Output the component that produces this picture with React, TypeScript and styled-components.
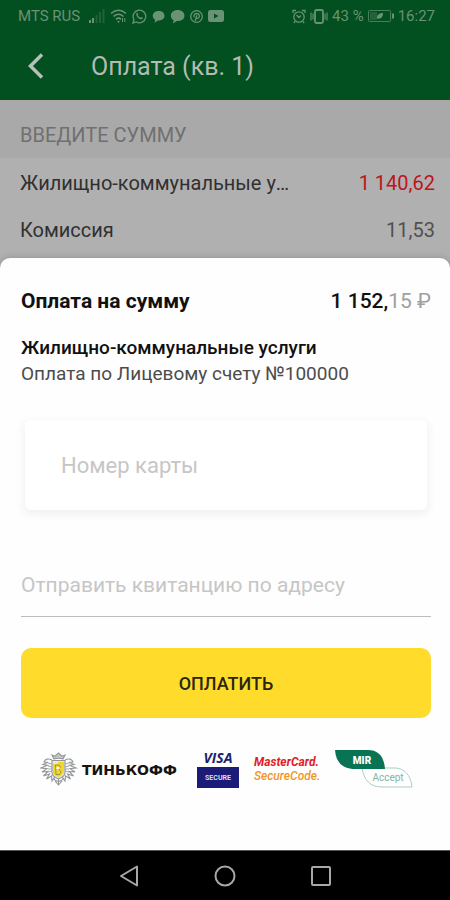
import React from "react";
import styled, { createGlobalStyle } from "styled-components";

const GlobalStyle = createGlobalStyle`
  * { box-sizing: border-box; }
  body { margin: 0; background: #b0b0b0; font-family: Roboto, "Noto Sans", sans-serif; }
  button, input { font-family: inherit; }
`;

const Screen = styled.div`
  display: flex;
  flex-direction: column;
  min-height: 100vh;
  background: #b0b0b0;
`;

const Header = styled.header`
  background: #024f20;
  color: #a9bfae;
`;

const StatusBar = styled.div`
  display: flex;
  align-items: center;
  justify-content: space-between;
  height: 32px;
  padding: 0 15px 0 18px;
  font-size: 15px;
  line-height: 20px;
  color: #6a9274;
`;

const StatusGroup = styled.div<{ $gap: number }>`
  display: flex;
  align-items: center;
  gap: ${(p) => p.$gap}px;
  white-space: nowrap;
`;

const Carrier = styled.span`
  margin-right: 4px;
`;

const Toolbar = styled.div`
  display: flex;
  align-items: center;
  height: 68px;
  padding: 0 20px;
  gap: 39px;
`;

const IconButton = styled.button`
  display: flex;
  align-items: center;
  justify-content: center;
  padding: 0;
  width: 32px;
  height: 40px;
  border: 0;
  background: none;
  color: inherit;
  cursor: pointer;
`;

const Title = styled.h1`
  margin: 0;
  padding-top: 2px;
  font-size: 25px;
  line-height: 32px;
  font-weight: 400;
  color: #b3bbb3;
`;

const SectionTitle = styled.h2`
  display: flex;
  align-items: flex-end;
  height: 58px;
  margin: 0;
  padding: 0 20px 11px;
  font-size: 20px;
  line-height: 24px;
  font-weight: 400;
  background: #a9a9a9;
  color: #707070;
`;

const Bills = styled.dl`
  margin: 0;
  padding: 1px 15px 5px 20px;
  background: #b0b0b0;
`;

const BillRow = styled.div`
  display: flex;
  justify-content: space-between;
  align-items: center;
  height: 47px;
  font-size: 20px;
  line-height: 24px;
`;

const BillName = styled.dt`
  width: 66%;
  overflow: hidden;
  text-overflow: ellipsis;
  white-space: nowrap;
  color: #303030;
`;

const BillValue = styled.dd<{ $due?: boolean }>`
  margin: 0;
  color: ${(p) => (p.$due ? "#bd1519" : "#505050")};
`;

const Sheet = styled.form`
  display: flex;
  flex-direction: column;
  flex: 1;
  padding: 29px 19px 16px 21px;
  border-radius: 10px 10px 0 0;
  background: #fefefe;
  box-shadow: 0 0 6px rgba(0, 0, 0, 0.2);
`;

const TotalRow = styled.div`
  display: flex;
  justify-content: space-between;
  align-items: center;
  font-size: 22px;
  line-height: 28px;
  color: #111;
`;

const TotalLabel = styled.h2`
  margin: 0;
  font-size: 21px;
  line-height: 28px;
  font-weight: 700;
`;

const Total = styled.span`
  font-size: 21px;
  font-weight: 500;
`;

const Minor = styled.span`
  font-weight: 400;
  color: #a0a0a0;
`;

const Details = styled.div`
  margin-top: 20px;
  line-height: 26px;
`;

const Service = styled.h3`
  margin: 0;
  font-size: 19px;
  line-height: 26px;
  font-weight: 500;
  color: #111;
`;

const Account = styled.p`
  margin: 0;
  font-size: 19px;
  line-height: 26px;
  color: #4c4c4c;
`;

const CardField = styled.label`
  display: flex;
  margin: 33px 4px 0;
  padding: 0 36px;
  height: 90px;
  border-radius: 6px;
  background: #fff;
  box-shadow: 0 3px 9px 2px rgba(0, 0, 0, 0.05);
`;

const TextInput = styled.input<{ $size: number }>`
  width: 100%;
  min-width: 0;
  padding: 0;
  border: 0;
  outline: 0;
  background: none;
  font-size: ${(p) => p.$size}px;
  color: #222;
  &::placeholder { color: #c6c6c6; opacity: 1; }
`;

const ReceiptField = styled.label`
  display: flex;
  height: 64px;
  margin-top: 43px;
  border-bottom: 1px solid #bcbcbc;
`;

const PayButton = styled.button`
  height: 70px;
  margin-top: 31px;
  padding: 2px 0 0;
  border: 0;
  border-radius: 10px;
  background: #ffdc2c;
  color: #2a250c;
  font-size: 18px;
  font-weight: 500;
  line-height: 24px;
  cursor: pointer;
`;

const Partners = styled.div`
  display: flex;
  align-items: center;
  justify-content: space-between;
  margin-top: 32px;
  padding: 0 18px 0 19px;
`;

const NavBar = styled.nav`
  display: flex;
  align-items: center;
  justify-content: center;
  gap: 64px;
  height: 50px;
  border-top: 1px solid #555;
  background: #000;
  color: #a8a8a8;
`;

function SignalIcon() {
  return (
    <svg width="16" height="14" viewBox="0 0 16 14" fill="currentColor" aria-hidden="true">
      <path d="M0 11h2v3H0zM3 9h2v5H3z" />
      <path d="M6.500 6h2v8h-2zM10 3h2v11h-2zM13.500 0h2v14h-2z" opacity=".3" />
    </svg>
  );
}

function WifiIcon() {
  return (
    <svg width="17" height="14" viewBox="0 0 17 14" fill="none" stroke="currentColor" strokeWidth="1.600" aria-hidden="true">
      <path d="M1 4.500q7.500-6.500 15 0M3.500 7.500q5-4.500 10 0M6 10.300q2.500-2.300 5 0" />
      <path d="M7 12h3l-1.500 2z" fill="currentColor" stroke="none" />
      <path d="M12.500 9v4M14.800 9v4" strokeWidth="1" />
    </svg>
  );
}

function WhatsAppIcon() {
  return (
    <svg width="15" height="15" viewBox="0 0 15 15" fill="none" stroke="currentColor" strokeWidth="1.300" aria-hidden="true">
      <path d="M1 14l.9-3.500A6.300 6.300 0 1 1 4.400 13z" />
      <path d="M4.500 4.200c.8-.9 1.300-.3 1.800 1.200l-.6.900c.7 1.200 1.500 1.900 2.700 2.500l.9-.9c1.600.6 2 1.100 1.100 1.900-2.300 2-7.200-2.500-5.900-5.600z" fill="currentColor" stroke="none" />
    </svg>
  );
}

function BubbleIcon({ size }: { size: number }) {
  return (
    <svg width={size} height={size} viewBox="0 0 14 14" fill="currentColor" aria-hidden="true">
      <path d="M7.200 1C3.500 1 .8 3.200.8 6.200c0 1.900 1 3.300 2.600 4.200L2.600 13.600 6.400 11.300C10.500 11.500 13.500 9.400 13.500 6.200 13.500 3.200 10.900 1 7.200 1z" />
    </svg>
  );
}

function PinterestIcon() {
  return (
    <svg width="13" height="13" viewBox="0 0 13 13" fill="none" stroke="currentColor" strokeWidth="1.300" aria-hidden="true">
      <circle cx="6.500" cy="6.500" r="5.800" />
      <path d="M4.300 7.300C3.200 5.300 4.600 3.500 6.700 3.500S10 5.100 9.200 7 6.800 8.800 6.100 7.600M6.800 5.300L5.200 11" />
    </svg>
  );
}

function VideoIcon() {
  return (
    <svg width="16" height="12" viewBox="0 0 16 12" fill="currentColor" aria-hidden="true">
      <path fillRule="evenodd" d="M2.500 0h11A2.500 2.500 0 0 1 16 2.500v7A2.500 2.500 0 0 1 13.500 12h-11A2.500 2.500 0 0 1 0 9.500v-7A2.500 2.500 0 0 1 2.500 0zM6 3.500v5L10.500 6z" />
    </svg>
  );
}

function AlarmIcon() {
  return (
    <svg width="14" height="15" viewBox="0 0 14 15" fill="none" stroke="currentColor" strokeWidth="1.300" aria-hidden="true">
      <circle cx="7" cy="8" r="5.200" />
      <path d="M1 4V1.500h3M10 1.500h3V4M4.500 6l2.400 2.500L9 6.500M3 12.500L1.800 14M11 12.500l1.200 1.500" />
    </svg>
  );
}

function VibrateIcon() {
  return (
    <svg width="18" height="15" viewBox="0 0 18 15" fill="none" stroke="currentColor" strokeWidth="1.800" aria-hidden="true">
      <rect x="5" y="1" width="8" height="13" rx="1.500" />
      <path d="M1 3.500v8M3 4.500v6M15 4.500v6M17 3.500v8" strokeWidth="1.100" />
    </svg>
  );
}

function BatteryIcon() {
  return (
    <svg width="26" height="12" viewBox="0 0 26 12" fill="none" stroke="currentColor" aria-hidden="true">
      <rect x=".5" y=".5" width="22" height="11" rx="1" opacity=".7" />
      <path d="M25 3.500v5" strokeWidth="2" />
      <path d="M2 2h7v8H2z" fill="currentColor" stroke="none" opacity=".3" />
      <path d="M9 8.500c-.5-3 1.500-5.500 6-5.500 0 4-2 6.500-6 5.500z" fill="currentColor" stroke="none" />
    </svg>
  );
}

function TinkoffLogo() {
  return (
    <svg width="142" height="36" viewBox="0 0 142 36" role="img" aria-label="Тинькофф">
      <g fill="none" stroke="#93979a" strokeWidth="1.100">
        <path d="M14 8l-2-4 3 1.200L18.500 2 22 5.200 25 4l-2 4c-3-1-6-1-9 0z" fill="#c4c6c8" />
        <path d="M12 9C8 7 5 8 4 11l4 .3-5 2.200 4.500.7L1 17l6 .6L2 21l6-.6L3.500 25l6-2-3 5 5-3 .5 5 3-4" />
        <path d="M25 9c4-2 7-1 8 2l-4 .3 5 2.200-4.500.7L36 17l-6 .6L35 21l-6-.6 4.500 4.600-6-2 3 5-5-3-.5 5-3-4" />
        <path d="M8 12l4 1M8 15l4 1M8 18l4 0M8 21l4-1M29 12l-4 1M29 15l-4 1M29 18h-4M29 21l-4-1" stroke="#a8aaac" />
        <path d="M13 27q5.500 7 11 0M15 30l3.500 4 3.500-4M18.500 27v7" />
        <path d="M12 9.500h13v12q0 4-6.500 6.500Q12 25.500 12 21.500z" fill="#e6e7e7" />
      </g>
      <path d="M13 13h5v-2h6v10q-1 3-5.500 5-4.500-1.500-5.500-4z" fill="#f0d62d" />
      <path d="M15.500 14h3.500l1.500 2-1.500 2 2 3-1.500 2.500h-3.500z" fill="none" stroke="#8b8740" strokeWidth=".8" />
      <path d="M16.500 16h3v2h-3z" fill="#fff" />
      <text x="42" y="24" fontFamily='"DejaVu Sans"' fontSize="14" fontWeight="700" fill="#141414">ТИНЬКОФФ</text>
    </svg>
  );
}

function VisaLogo() {
  return (
    <svg width="42" height="38" viewBox="0 0 42 38" role="img" aria-label="Visa Secure">
      <text x="21" y="13" textAnchor="middle" fontFamily='"Open Sans"' fontSize="14" fontWeight="700" fontStyle="italic" fill="#1a236c">VISA</text>
      <path d="M0 17h42v21H0z" fill="#1b1b78" />
      <text x="21" y="30" textAnchor="middle" fontFamily="Roboto" fontSize="7" fontWeight="700" fill="#dddded">SECURE</text>
    </svg>
  );
}

function MasterCardLogo() {
  return (
    <svg width="66" height="32" viewBox="0 0 66 32" role="img" aria-label="MasterCard SecureCode">
      <text x="0" y="13" fontFamily="Roboto" fontSize="12" fontWeight="700" fontStyle="italic" fill="#e02026">MasterCard.</text>
      <text x="0" y="27" fontFamily="Roboto" fontSize="12" fontWeight="500" fontStyle="italic" fill="#ef9628">SecureCode.</text>
    </svg>
  );
}

function MirLogo() {
  return (
    <svg width="78" height="38" viewBox="0 0 78 38" role="img" aria-label="MIR Accept">
      <path d="M27 18h33c9 0 16 7 17 19H47c-12 0-18-7-20-19z" fill="#fefefe" stroke="#a9d0c3" />
      <path d="M0 0h33c10 0 16 6 17 19H20C8 19 1 13 0 0z" fill="#087453" />
      <text x="27" y="14" textAnchor="middle" fontFamily="Roboto" fontSize="10" fontWeight="900" fill="#fff">MIR</text>
      <text x="53" y="31" textAnchor="middle" fontFamily="Roboto" fontSize="10" fill="#83b5a4">Accept</text>
    </svg>
  );
}

export default function App() {
  return (
    <>
      <GlobalStyle />
      <Screen>
        <Header>
          <StatusBar>
            <StatusGroup $gap={5}>
              <Carrier>MTS RUS</Carrier>
              <SignalIcon />
              <WifiIcon />
              <WhatsAppIcon />
              <BubbleIcon size={13} />
              <BubbleIcon size={15} />
              <PinterestIcon />
              <VideoIcon />
            </StatusGroup>
            <StatusGroup $gap={4}>
              <AlarmIcon />
              <VibrateIcon />
              <span>43 %</span>
              <BatteryIcon />
              <span>16:27</span>
            </StatusGroup>
          </StatusBar>
          <Toolbar>
            <IconButton type="button" aria-label="Назад">
              <svg width="18" height="26" viewBox="0 0 18 26" fill="none" stroke="#b7c0b8" strokeWidth="3.500" aria-hidden="true">
                <path d="M15 1.500L3.500 13 15 24.500" />
              </svg>
            </IconButton>
            <Title>Оплата (кв. 1)</Title>
          </Toolbar>
        </Header>
        <SectionTitle>ВВЕДИТЕ СУММУ</SectionTitle>
        <Bills>
          <BillRow>
            <BillName>Жилищно-коммунальные услуги</BillName>
            <BillValue $due>1 140,62</BillValue>
          </BillRow>
          <BillRow>
            <BillName>Комиссия</BillName>
            <BillValue>11,53</BillValue>
          </BillRow>
        </Bills>
        <Sheet onSubmit={(e) => e.preventDefault()}>
          <TotalRow>
            <TotalLabel>Оплата на сумму</TotalLabel>
            <Total>1 152,<Minor>15 ₽</Minor></Total>
          </TotalRow>
          <Details>
            <Service>Жилищно-коммунальные услуги</Service>
            <Account>Оплата по Лицевому счету №100000</Account>
          </Details>
          <CardField>
            <TextInput $size={22} aria-label="Номер карты" placeholder="Номер карты" inputMode="numeric" />
          </CardField>
          <ReceiptField>
            <TextInput $size={21} type="email" aria-label="Отправить квитанцию по адресу" placeholder="Отправить квитанцию по адресу" />
          </ReceiptField>
          <PayButton type="submit">ОПЛАТИТЬ</PayButton>
          <Partners>
            <TinkoffLogo />
            <VisaLogo />
            <MasterCardLogo />
            <MirLogo />
          </Partners>
        </Sheet>
        <NavBar>
          <IconButton type="button" aria-label="Назад">
            <svg width="20" height="24" viewBox="0 0 20 24" fill="none" stroke="currentColor" strokeWidth="2" strokeLinejoin="round" aria-hidden="true">
              <path d="M18 2.500v19L2 12z" />
            </svg>
          </IconButton>
          <IconButton type="button" aria-label="Домой">
            <svg width="22" height="22" viewBox="0 0 22 22" fill="none" stroke="currentColor" strokeWidth="2" aria-hidden="true">
              <circle cx="11" cy="11" r="9.500" />
            </svg>
          </IconButton>
          <IconButton type="button" aria-label="Недавние">
            <svg width="20" height="20" viewBox="0 0 20 20" fill="none" stroke="currentColor" strokeWidth="2" aria-hidden="true">
              <rect x="1" y="1" width="18" height="18" rx="1" />
            </svg>
          </IconButton>
        </NavBar>
      </Screen>
    </>
  );
}
